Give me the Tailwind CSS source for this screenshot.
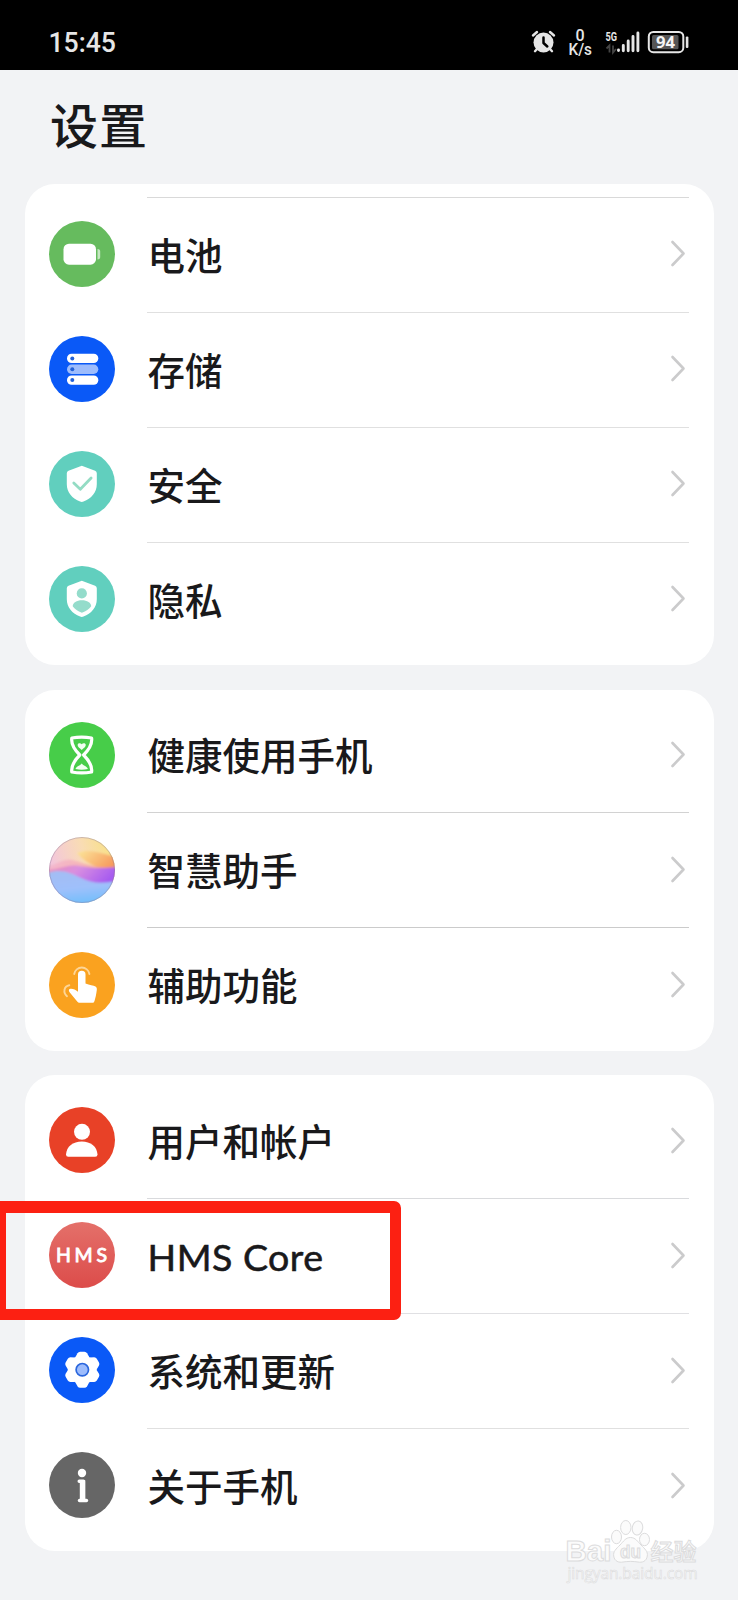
<!DOCTYPE html>
<html lang="zh-CN">
<head>
<meta charset="utf-8">
<title>设置</title>
<script src="https://cdn.jsdelivr.net/npm/@tailwindcss/browser@4"></script>
</head>
<body class="bg-[#f2f3f5]">
<svg class="hidden">
  <symbol id="chev" viewBox="0 0 18 30"><path d="M3.5 3 14.500 14.500 3.500 26" fill="none" stroke="#cbcbcc" stroke-width="2.600" stroke-linecap="round" stroke-linejoin="round"/></symbol>
</svg>
<div class="relative w-[738px] h-[1600px] overflow-hidden bg-[#f2f3f5] font-['Lato','Noto_Sans_CJK_SC',sans-serif] text-[#19191b]">

  <!-- Status bar -->
  <header class="h-[70px] bg-black flex justify-between">
    <svg class="w-[140px] h-[70px]" viewBox="0 0 140 70"><text x="48.5" y="52" font-family="Roboto" font-size="28" font-weight="500" fill="#e6e6e6" textLength="67.500" lengthAdjust="spacingAndGlyphs">15:45</text></svg>
    <svg class="w-[238px] h-[70px]" viewBox="500 0 238 70" fill="#e6e6e6">
      <circle cx="543.5" cy="42.5" r="10"/>
      <path d="M533 35.500l4-3.500M554 35.500l-4-3.500M537 49l-2 2.200M550 49l2 2.200" stroke="#e6e6e6" stroke-width="2.400" stroke-linecap="round"/>
      <path d="M543.5 37.500v5.500l3.800 3.500" fill="none" stroke="#000" stroke-width="2.500" stroke-linecap="round" stroke-linejoin="round"/>
      <text x="580" y="40.700" font-family="Roboto" font-size="16" font-weight="500" text-anchor="middle">0</text>
      <text x="568.500" y="55" font-family="Roboto" font-size="16" font-weight="500" textLength="23.500" lengthAdjust="spacingAndGlyphs">K/s</text>
      <text x="605.500" y="41" font-family="Roboto" font-size="12.500" font-weight="700" textLength="11.500" lengthAdjust="spacingAndGlyphs">5G</text>
      <path d="M609.500 52.500v-7l-3 3M613 45.500v7l3-3.500" fill="none" stroke="#444" stroke-width="1.800"/>
      <path d="M618.500 50v.5M623.300 45.500v5.200M628.200 41v9.700M633 36.500v14.200M637.900 33v17.700" stroke="#e6e6e6" stroke-width="2.900" stroke-linecap="round"/>
      <rect x="648.800" y="32" width="34.500" height="20.200" rx="4.500" fill="none" stroke="#e6e6e6" stroke-width="2"/>
      <rect x="652" y="35" width="26.500" height="14.300" rx="1.500" fill="#555"/>
      <rect x="685.800" y="36.500" width="2.600" height="11.500" rx="1"/>
      <text x="665.400" y="47.800" font-family="Open Sans" font-size="16" font-weight="700" text-anchor="middle" textLength="19" lengthAdjust="spacingAndGlyphs" fill="#f4f4f4">94</text>
    </svg>
  </header>

  <h1 class="h-[114px] pl-[50px] pt-[20.500px] text-[48px] tracking-[1px] leading-[70px] font-medium">设置</h1>

  <main class="flex flex-col gap-[24.500px] px-[24.500px]">
    <section class="h-[481px] rounded-[30px] bg-white pt-[13px] pl-[24.500px] pr-[24.500px]">
      <div class="h-px ml-[98px] bg-[#d9d9d9]"></div>

      <div class="flex h-[115px] items-center gap-8">
        <svg class="mb-[4px] size-[66px] shrink-0" viewBox="0 0 66 66"><circle cx="33" cy="33" r="33" fill="#66bb5e"/><rect x="14.500" y="22.700" width="32.500" height="21" rx="5.500" fill="#fff"/><path d="M48.500 28c2 0 2.700 1 2.700 2.500v5.500c0 1.500-.7 2.500-2.700 2.500z" fill="#c4e6c0"/></svg>
        <div class="flex flex-1 h-full items-center justify-between border-b border-[#e0e0e0]"><span class="pl-[0.500px] pt-px text-[37.500px] leading-[56px] font-medium">电池</span><svg class="mr-[2px] mb-[2px] w-[18px] h-[30px]"><use href="#chev"/></svg></div>
      </div>
      <div class="flex h-[115px] items-center gap-8">
        <svg class="mb-[4px] size-[66px] shrink-0" viewBox="0 0 66 66"><circle cx="33" cy="33" r="33" fill="#0a59f7"/><g fill="#fff"><rect x="18" y="17.700" width="31.300" height="9.300" rx="4.600"/><rect x="18" y="28.600" width="31.300" height="9.300" rx="4.600" opacity=".6"/><rect x="18" y="39.500" width="31.300" height="9.300" rx="4.600"/></g><g fill="#2261d8"><circle cx="23.300" cy="22.400" r="2"/><circle cx="23.300" cy="33.200" r="2"/><circle cx="23.300" cy="44.100" r="2"/></g></svg>
        <div class="flex flex-1 h-full items-center justify-between border-b border-[#e0e0e0]"><span class="pl-[0.500px] pt-px text-[37.500px] leading-[56px] font-medium">存储</span><svg class="mr-[2px] mb-[2px] w-[18px] h-[30px]"><use href="#chev"/></svg></div>
      </div>
      <div class="flex h-[115px] items-center gap-8">
        <svg class="mb-[4px] size-[66px] shrink-0" viewBox="0 0 66 66"><circle cx="33" cy="33" r="33" fill="#61cfbe"/><path d="M31.500 15.200q1.300-.7 2.600 0l12 4.500q1.700.7 1.700 2.500v11c0 8.500-5.500 14-13.300 17.400q-1.700.7-3.400 0C23.300 47.200 17.800 41.700 17.800 33.200v-11q0-1.800 1.700-2.500z" fill="#fff"/><path d="M24.800 32l6.500 6.200 10.800-11.200" fill="none" stroke="#94dcc4" stroke-width="2.800" stroke-linecap="round" stroke-linejoin="round"/></svg>
        <div class="flex flex-1 h-full items-center justify-between border-b border-[#e0e0e0]"><span class="pl-[0.500px] pt-px text-[37.500px] leading-[56px] font-medium">安全</span><svg class="mr-[2px] mb-[2px] w-[18px] h-[30px]"><use href="#chev"/></svg></div>
      </div>
      <div class="flex h-[115px] items-center gap-8">
        <svg class="mb-[4px] size-[66px] shrink-0" viewBox="0 0 66 66"><circle cx="33" cy="33" r="33" fill="#61cfbe"/><path d="M31.500 15.200q1.300-.7 2.600 0l12 4.500q1.700.7 1.700 2.500v11c0 8.500-5.500 14-13.300 17.400q-1.700.7-3.400 0C23.300 47.200 17.800 41.700 17.800 33.200v-11q0-1.800 1.700-2.500z" fill="#fff"/><g fill="#94dccb"><circle cx="32.800" cy="27.400" r="5.100"/><path d="M23.700 40.200c0-3.400 4-6 9.200-6s9.300 2.600 9.300 6c-2 3-5.300 5-9.300 6.500-4-1.500-7.200-3.500-9.200-6.500z"/></g></svg>
        <div class="flex flex-1 h-full items-center justify-between border-b border-transparent"><span class="pl-[0.500px] pt-px text-[37.500px] leading-[56px] font-medium">隐私</span><svg class="mr-[2px] mb-[2px] w-[18px] h-[30px]"><use href="#chev"/></svg></div>
      </div>
    </section>

    <section class="h-[361px] rounded-[30px] bg-white pt-[8.500px] pl-[24.500px] pr-[24.500px]">
      <div class="flex h-[115px] items-center gap-8">
        <svg class="mb-[2px] size-[66px] shrink-0" viewBox="0 0 66 66"><circle cx="33" cy="33" r="33" fill="#47cd49"/><path d="M22.800 16q9.900-1.800 19.800 0c1 7-3 12-8 17 5 5 9 10 8 17q-9.900 1.800-19.800 0c-1-7 3-12 8-17-5-5-9-10-8-17z" fill="none" stroke="#fff" stroke-width="3.200" stroke-linejoin="round"/><path d="M32.700 28c-2.500-2-4.500-3.500-4-5.500.5-1.600 3-1.600 4-.2 1-1.400 3.500-1.400 4 .2.500 2-1.500 3.500-4 5.500zM26.500 47c1-3 4.500-3 6.200-5.500 1.700 2.500 5.200 2.500 6.200 5.500q-6.200 1.400-12.400 0z" fill="#f0fff0"/></svg>
        <div class="flex flex-1 h-full items-center justify-between border-b border-[#d2d2d2]"><span class="pl-[0.500px] pt-px text-[37.500px] leading-[56px] font-medium">健康使用手机</span><svg class="mr-[2px] mb-[1px] w-[18px] h-[30px]"><use href="#chev"/></svg></div>
      </div>
      <div class="flex h-[115px] items-center gap-8">
        <svg class="mb-[2px] size-[66px] shrink-0" viewBox="0 0 66 66">
          <defs>
            <clipPath id="ball"><circle cx="33" cy="33" r="33"/></clipPath>
            <linearGradient id="sky" x1="0" y1=".3" x2="1" y2="0"><stop offset="0" stop-color="#f3c6dc"/><stop offset=".5" stop-color="#f9dcb4"/><stop offset="1" stop-color="#f8e27a"/></linearGradient>
            <linearGradient id="org" x1="0" y1="0" x2="1" y2=".5"><stop offset="0" stop-color="#fbe69a"/><stop offset="1" stop-color="#f79a5c"/></linearGradient>
            <linearGradient id="pur" x1="0" y1="0" x2="1" y2=".3"><stop offset="0" stop-color="#ec8fb4"/><stop offset=".45" stop-color="#d98fe0"/><stop offset="1" stop-color="#a65bf0"/></linearGradient>
            <linearGradient id="blu" x1=".2" y1="0" x2=".4" y2="1"><stop offset="0" stop-color="#a4bdf4"/><stop offset=".5" stop-color="#9fc0fb"/><stop offset="1" stop-color="#6abffb"/></linearGradient>
            <linearGradient id="pnk" x1="0" y1="0" x2="1" y2=".2"><stop offset="0" stop-color="#f3b4cc"/><stop offset=".5" stop-color="#f4a9b8"/><stop offset="1" stop-color="#f58f78"/></linearGradient>
            <filter id="soft"><feGaussianBlur stdDeviation="1"/></filter>
          </defs>
          <g clip-path="url(#ball)"><path d="M0 0h66v66H0z" fill="url(#sky)"/><g filter="url(#soft)"><path d="M28 16c12-5 22 0 40 4v14c-14-2-28-4-40-18z" fill="url(#org)"/><path d="M-2 29c10-1 16-8 25-6 12 3 23 9 45 6v14H-2z" fill="url(#pnk)" opacity=".75"/><path d="M-2 33c12 0 20-6 32-4 12 2 22 3 38 1v20H20z" fill="url(#pur)"/><path d="M-2 36c14-5 24 0 34 5s20 6 36 3v26H-2z" fill="url(#blu)"/></g></g>
          <circle cx="33" cy="33" r="32.500" fill="none" stroke="#8a7a9a" stroke-opacity=".4"/>
        </svg>
        <div class="flex flex-1 h-full items-center justify-between border-b border-[#cbcbcb]"><span class="pl-[0.500px] pt-px text-[37.500px] leading-[56px] font-medium">智慧助手</span><svg class="mr-[2px] mb-[1px] w-[18px] h-[30px]"><use href="#chev"/></svg></div>
      </div>
      <div class="flex h-[115px] items-center gap-8">
        <svg class="mb-[2px] size-[66px] shrink-0" viewBox="0 0 66 66"><circle cx="33" cy="33" r="33" fill="#faa21f"/><path d="M29 38V22.500a3.700 3.700 0 0 1 7.500 0V31.500c4 1.500 8 2 10 3 1.300.7 1.500 2 1.300 3.500-.5 4-1.300 8-2.300 11-.4 1.300-1 1.800-2.300 1.800H31c-1.500 0-2-.4-3-1.500l-7.400-9c-1.500-2-.5-3.800 1.500-3.500 2.500.3 4.500 1 6.900 3z" fill="#fff"/><g fill="none" stroke="#fdd596" stroke-width="1.900" stroke-linecap="round"><path d="M25.200 22a7.700 7.700 0 0 1 15.200 0M20.300 33.200c-5.500 1-6.500 7.500-2.300 11"/></g></svg>
        <div class="flex flex-1 h-full items-center justify-between border-b border-transparent"><span class="pl-[0.500px] pt-px text-[37.500px] leading-[56px] font-medium">辅助功能</span><svg class="mr-[2px] mb-[1px] w-[18px] h-[30px]"><use href="#chev"/></svg></div>
      </div>
    </section>

    <section class="h-[475.500px] rounded-[30px] bg-white pt-[9px] pl-[24.500px] pr-[24.500px]">
      <div class="flex h-[115px] items-center gap-8">
        <svg class="mb-[3px] size-[66px] shrink-0" viewBox="0 0 66 66"><circle cx="33" cy="33" r="33" fill="#e84127"/><circle cx="33" cy="24.800" r="8" fill="#fff"/><path d="M17 47.500C17.500 39.500 24 34.500 32.800 34.500S48 39.500 48.500 47.500q0 2.300-2.300 2.300H19.300q-2.300 0-2.300-2.300z" fill="#fff"/></svg>
        <div class="flex flex-1 h-full items-center justify-between border-b border-[#d9dadd]"><span class="pl-[0.500px] pt-px text-[37.500px] leading-[56px] font-medium">用户和帐户</span><svg class="mr-[2px] mb-[1px] w-[18px] h-[30px]"><use href="#chev"/></svg></div>
      </div>
      <div class="flex h-[115px] items-center gap-8">
        <svg class="mb-[3px] size-[66px] shrink-0" viewBox="0 0 66 66"><defs><linearGradient id="hms" x1="0" y1="0" x2="0" y2="1"><stop offset="0" stop-color="#e4706a"/><stop offset="1" stop-color="#dc4c4a"/></linearGradient></defs><circle cx="33" cy="33" r="33" fill="url(#hms)"/><text x="7" y="40.300" font-family="Lato" font-size="19.500" stroke="#fff" stroke-width=".9" textLength="51" fill="#fff">HMS</text></svg>
        <div class="flex flex-1 h-full items-center justify-between border-b border-[#e0e0e3]"><span class="pl-[0.500px] pt-px text-[37.500px] leading-[56px] tracking-[0.500px] [-webkit-text-stroke:0.6px_#19191b]">HMS Core</span><svg class="mr-[2px] mb-[1px] w-[18px] h-[30px]"><use href="#chev"/></svg></div>
      </div>
      <div class="flex h-[115px] items-center gap-8">
        <svg class="mb-[3px] size-[66px] shrink-0" viewBox="0 0 66 66"><circle cx="33" cy="33" r="33" fill="#0a59f7"/><g transform="translate(33.300 32.700)" fill="#fff"><circle r="14.500"/><path id="tooth" d="M-7 -12.500 -4.800 -16.500Q-3.800 -18 -2.200 -18H2.200Q3.800 -18 4.800 -16.500L7 -12.500z"/><use href="#tooth" transform="rotate(60)"/><use href="#tooth" transform="rotate(120)"/><use href="#tooth" transform="rotate(180)"/><use href="#tooth" transform="rotate(240)"/><use href="#tooth" transform="rotate(300)"/><circle r="6.200" fill="#9dbcfc" stroke="#2a66dd" stroke-width="1.700"/></g></svg>
        <div class="flex flex-1 h-full items-center justify-between border-b border-[#e0e0e0]"><span class="pl-[0.500px] pt-px text-[37.500px] leading-[56px] font-medium">系统和更新</span><svg class="mr-[2px] mb-[1px] w-[18px] h-[30px]"><use href="#chev"/></svg></div>
      </div>
      <div class="flex h-[115px] items-center gap-8">
        <svg class="mb-[3px] size-[66px] shrink-0" viewBox="0 0 66 66"><circle cx="33" cy="33" r="33" fill="#666"/><circle cx="33" cy="21" r="4.200" fill="#fff"/><path d="M30.200 29.300h4.300v18" fill="none" stroke="#fff" stroke-width="3.400" stroke-linecap="round" stroke-linejoin="round"/><path d="M30.800 28h5.400v20h-5.400z" fill="#fff"/><path d="M30.500 48.500h7" stroke="#fff" stroke-width="3.400" stroke-linecap="round"/></svg>
        <div class="flex flex-1 h-full items-center justify-between border-b border-transparent"><span class="pl-[0.500px] pt-px text-[37.500px] leading-[56px] font-medium">关于手机</span><svg class="mr-[2px] mb-[1px] w-[18px] h-[30px]"><use href="#chev"/></svg></div>
      </div>
    </section>
  </main>

  <!-- Highlight frame -->
  <div class="absolute left-0 top-[1201px] w-[401px] h-[118.500px] border-[#fc2012] border-l-[6px] border-t-[12px] border-r-[11px] border-b-[11.500px] rounded-r-[7px]"></div>

  <!-- Watermark -->
  <svg class="absolute left-[560px] top-[1515px] w-[150px] h-[75px]" viewBox="560 1515 150 75" fill="#fbfbfb" stroke="#dcdcdd" stroke-width="1">
    <text x="565.500" y="1561" font-family="Liberation Sans" font-weight="700" font-size="30" textLength="46" lengthAdjust="spacingAndGlyphs">Bai</text>
    <ellipse cx="616.500" cy="1537" rx="5" ry="6.700"/><ellipse cx="625.800" cy="1527.500" rx="5.200" ry="7"/><ellipse cx="637.500" cy="1528" rx="5.200" ry="7" transform="rotate(10 637.500 1528)"/><ellipse cx="644.500" cy="1539.500" rx="5" ry="6.200"/>
    <path d="M630.500 1537.500c5 0 7 4 10.500 7.500 4 4 7 6.500 6.300 11-.8 5.500-5.300 6.800-9.300 6-5-.8-10-.8-15 0-4 .8-8.500-.5-9.300-6-.7-4.500 2.300-7 6.300-11 3.500-3.500 5.500-7.500 10.500-7.500z"/>
    <text x="620" y="1558" font-family="Liberation Sans" font-weight="700" font-size="18" textLength="21" lengthAdjust="spacingAndGlyphs" fill="#f4f4f5">du</text>
    <text x="650.500" y="1559.500" font-family="Noto Sans CJK SC" font-weight="500" font-size="23" textLength="46">经验</text>
    <text x="567.500" y="1578.500" font-family="Open Sans" font-size="15.500" textLength="130" stroke-width=".6">jingyan.baidu.com</text>
  </svg>
</div>
</body>
</html>
